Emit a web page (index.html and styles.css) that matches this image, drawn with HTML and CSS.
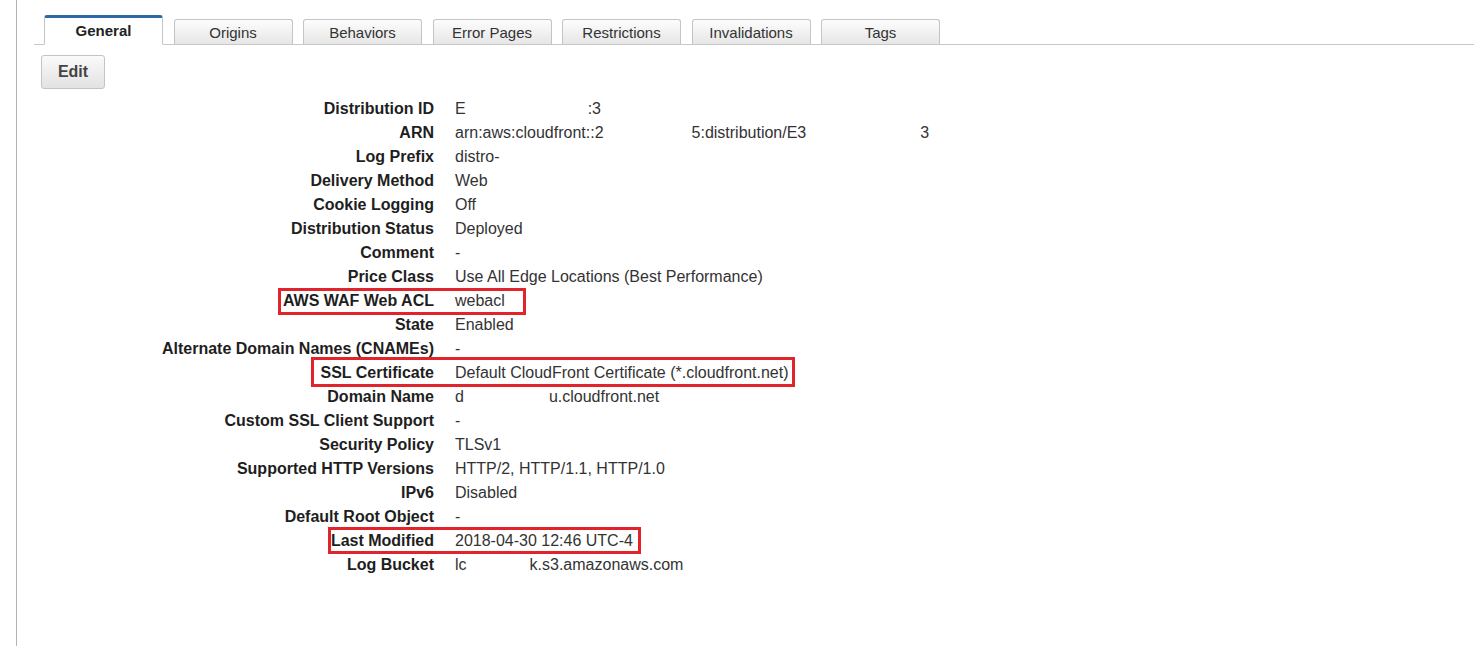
FILE: index.html
```html
<!DOCTYPE html>
<html>
<head>
<meta charset="utf-8">
<link rel="stylesheet" href="styles.css">
</head>
<body>
<div class="page">
  <div class="tabs">
    <div class="tab active">General</div>
    <div class="tab">Origins</div>
    <div class="tab">Behaviors</div>
    <div class="tab">Error Pages</div>
    <div class="tab">Restrictions</div>
    <div class="tab">Invalidations</div>
    <div class="tab">Tags</div>
  </div>
  <div class="toolbar"><button class="btn">Edit</button></div>
  <div class="details">
    <div class="row"><div class="k">Distribution ID</div><div class="v">E<span class="gap g-id"></span>:3</div></div>
    <div class="row"><div class="k">ARN</div><div class="v">arn:aws:cloudfront::2<span class="gap g-arn1"></span>5:distribution/E3<span class="gap g-arn2"></span>3</div></div>
    <div class="row"><div class="k">Log Prefix</div><div class="v">distro-</div></div>
    <div class="row"><div class="k">Delivery Method</div><div class="v">Web</div></div>
    <div class="row"><div class="k">Cookie Logging</div><div class="v">Off</div></div>
    <div class="row"><div class="k">Distribution Status</div><div class="v">Deployed</div></div>
    <div class="row"><div class="k">Comment</div><div class="v">-</div></div>
    <div class="row"><div class="k">Price Class</div><div class="v">Use All Edge Locations (Best Performance)</div></div>
    <div class="row"><div class="k">AWS WAF Web ACL</div><div class="v">webacl</div><div class="mark m-waf"></div></div>
    <div class="row"><div class="k">State</div><div class="v">Enabled</div></div>
    <div class="row"><div class="k">Alternate Domain Names (CNAMEs)</div><div class="v">-</div></div>
    <div class="row"><div class="k">SSL Certificate</div><div class="v">Default CloudFront Certificate (*.cloudfront.net)</div><div class="mark m-ssl"></div></div>
    <div class="row"><div class="k">Domain Name</div><div class="v">d<span class="gap g-dom"></span>u.cloudfront.net</div></div>
    <div class="row"><div class="k">Custom SSL Client Support</div><div class="v">-</div></div>
    <div class="row"><div class="k">Security Policy</div><div class="v">TLSv1</div></div>
    <div class="row"><div class="k">Supported HTTP Versions</div><div class="v">HTTP/2, HTTP/1.1, HTTP/1.0</div></div>
    <div class="row"><div class="k">IPv6</div><div class="v">Disabled</div></div>
    <div class="row"><div class="k">Default Root Object</div><div class="v">-</div></div>
    <div class="row"><div class="k">Last Modified</div><div class="v">2018-04-30 12:46 UTC-4</div><div class="mark m-mod"></div></div>
    <div class="row"><div class="k">Log Bucket</div><div class="v">lc<span class="gap g-log"></span>k.s3.amazonaws.com</div></div>
  </div>
</div>
</body>
</html>
```

FILE: styles.css
```css
* { box-sizing: border-box; }
html, body { margin: 0; padding: 0; background: #fff; }
body {
  font-family: "Liberation Sans", Arial, sans-serif;
  color: #222;
  overflow: hidden;
}
.page {
  margin-left: 16px;
  border-left: 1px solid #b4b4b4;
  min-height: 646px;
  display: flex;
  flex-direction: column;
}
.tabs {
  margin-left: 17px;
  padding: 15px 0 0 10px;
  display: flex;
  align-items: flex-end;
  gap: 10.5px;
  border-bottom: 1px solid #c8c8c8;
}
.tab {
  width: 119px;
  height: 26px;
  margin-bottom: -1px;
  border: 1px solid #c4c4c4;
  border-bottom: 1px solid #c8c8c8;
  border-radius: 3px 3px 0 0;
  background: linear-gradient(#fdfdfd, #e6e6e6);
  font-size: 15px;
  color: #333;
  text-align: center;
  line-height: 26px;
}
.tab.active {
  height: 30px;
  border-top: 3px solid #2f67a9;
  border-bottom-color: #fff;
  background: #fff;
  font-weight: bold;
  color: #222;
  line-height: 26px;
}
.toolbar {
  padding: 10px 0 0 24px;
}
.btn {
  width: 64px;
  height: 34px;
  border: 1px solid #c4c4c4;
  border-radius: 3px;
  background: linear-gradient(#fafafa, #e2e2e2);
  font-family: "Liberation Sans", Arial, sans-serif;
  font-size: 16px;
  font-weight: bold;
  color: #444;
  padding: 0;
  display: block;
}
.details {
  margin-top: 8px;
  display: flex;
  flex-direction: column;
}
.row {
  position: relative;
  display: grid;
  grid-template-columns: 417px auto;
  column-gap: 21px;
  height: 24px;
  line-height: 24px;
  font-size: 16px;
}
.k {
  text-align: right;
  font-weight: bold;
  color: #1e1e1e;
  white-space: nowrap;
}
.v {
  color: #333;
  white-space: nowrap;
}
.gap { display: inline-block; }
.g-id { width: 122px; }
.g-arn1 { width: 88px; }
.g-arn2 { width: 114px; }
.g-dom { width: 85px; }
.g-log { width: 63px; }
.mark {
  position: absolute;
  border: 3px solid #e1232b;
  pointer-events: none;
}
.m-waf { left: 261px; top: -1px; width: 248px; height: 27px; }
.m-ssl { left: 294px; top: -4px; width: 484px; height: 30px; }
.m-mod { left: 311px; top: -2px; width: 313px; height: 27px; }
```
